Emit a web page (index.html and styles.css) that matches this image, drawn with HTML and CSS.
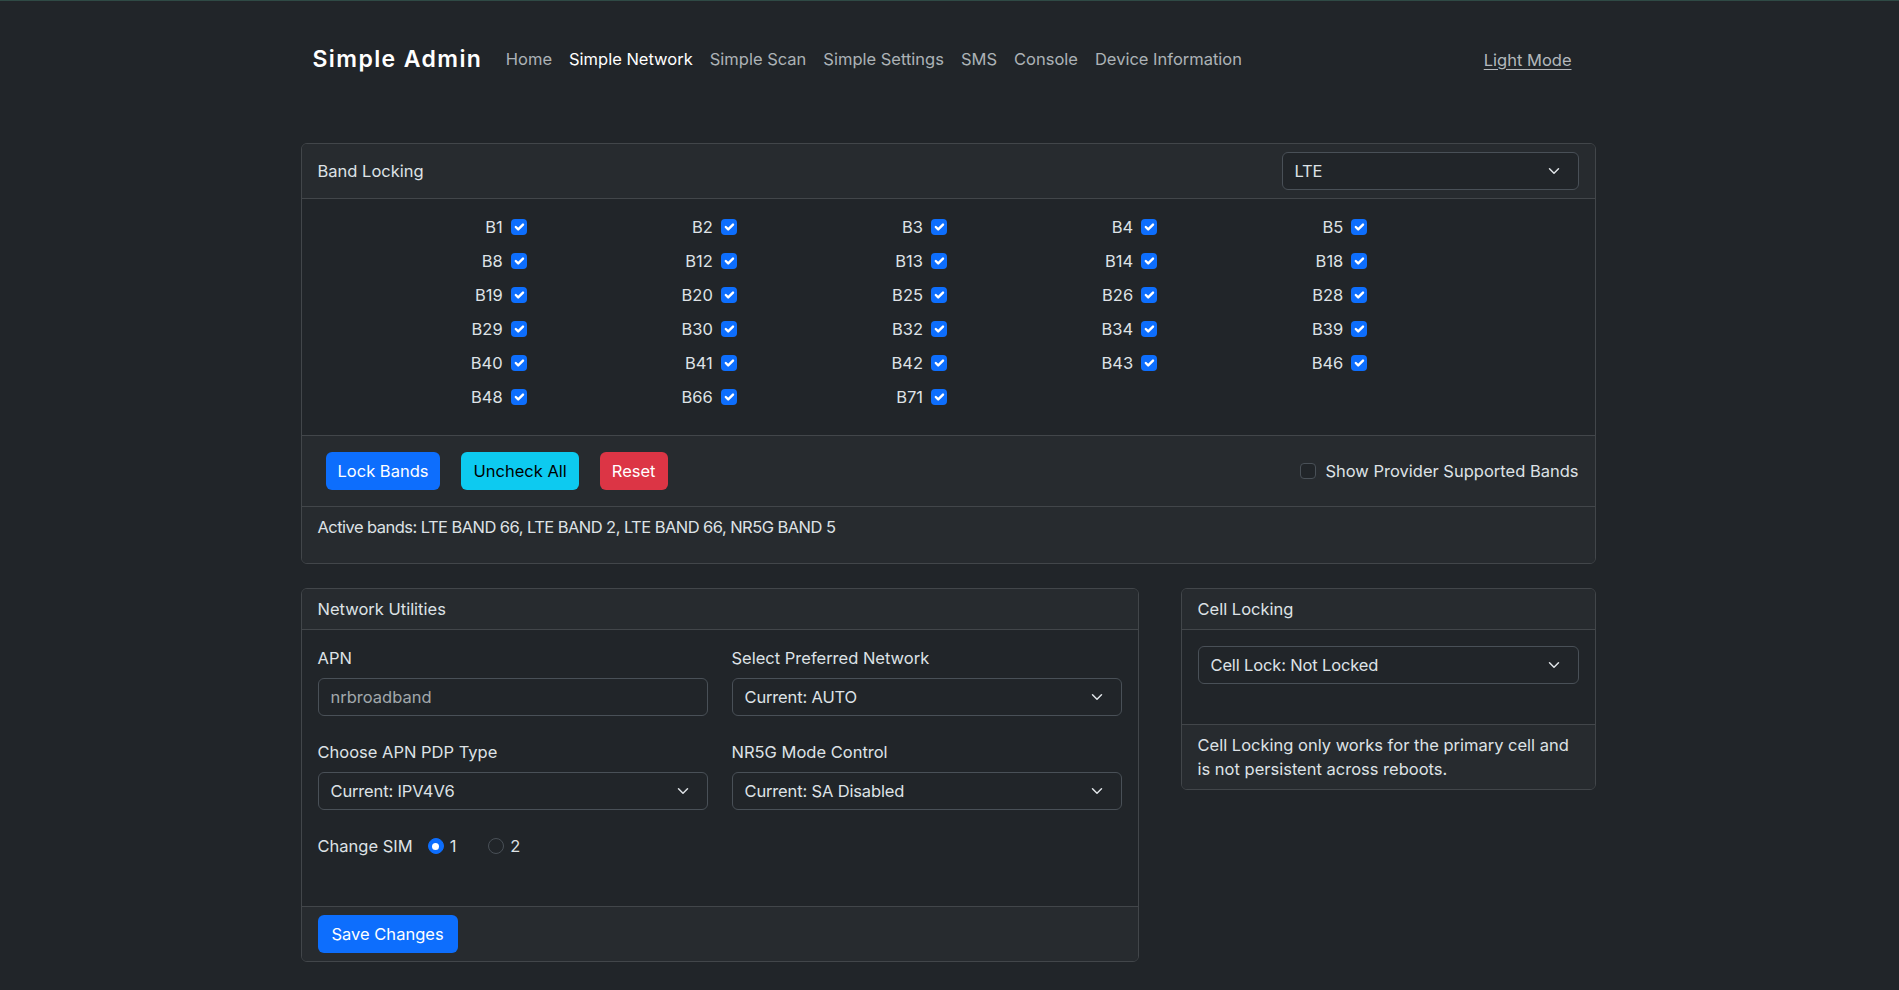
FILE: index.html
```html
<!DOCTYPE html>
<html lang="en">
<head>
<meta charset="utf-8">
<title>Simple Admin</title>
<link rel="stylesheet" href="styles.css">
</head>
<body>
<nav class="navbar">
  <div class="container nav-inner">
    <span class="brand">Simple Admin</span>
    <ul class="nav">
      <li><a href="#">Home</a></li>
      <li><a href="#" class="active">Simple Network</a></li>
      <li><a href="#">Simple Scan</a></li>
      <li><a href="#">Simple Settings</a></li>
      <li><a href="#">SMS</a></li>
      <li><a href="#">Console</a></li>
      <li><a href="#">Device Information</a></li>
    </ul>
    <a href="#" class="mode">Light Mode</a>
  </div>
</nav>

<main class="container main">
  <section class="card">
    <div class="card-header band-header">
      <span>Band Locking</span>
      <div class="select select-lte">
        <span>LTE</span>
        <svg class="chev" viewBox="0 0 16 16" width="16" height="12" preserveAspectRatio="xMidYMid meet"><path fill="none" stroke="#dee2e6" stroke-linecap="round" stroke-linejoin="round" stroke-width="2" d="m2 5 6 6 6-6"/></svg>
      </div>
    </div>
    <div class="band-body">
      <div class="band-grid">
        <div class="band"><span>B1</span><span class="cb"><svg viewBox="0 0 20 20"><path fill="none" stroke="#fff" stroke-linecap="round" stroke-linejoin="round" stroke-width="3" d="m6 10 3 3 6-6"/></svg></span></div>
        <div class="band"><span>B2</span><span class="cb"><svg viewBox="0 0 20 20"><path fill="none" stroke="#fff" stroke-linecap="round" stroke-linejoin="round" stroke-width="3" d="m6 10 3 3 6-6"/></svg></span></div>
        <div class="band"><span>B3</span><span class="cb"><svg viewBox="0 0 20 20"><path fill="none" stroke="#fff" stroke-linecap="round" stroke-linejoin="round" stroke-width="3" d="m6 10 3 3 6-6"/></svg></span></div>
        <div class="band"><span>B4</span><span class="cb"><svg viewBox="0 0 20 20"><path fill="none" stroke="#fff" stroke-linecap="round" stroke-linejoin="round" stroke-width="3" d="m6 10 3 3 6-6"/></svg></span></div>
        <div class="band"><span>B5</span><span class="cb"><svg viewBox="0 0 20 20"><path fill="none" stroke="#fff" stroke-linecap="round" stroke-linejoin="round" stroke-width="3" d="m6 10 3 3 6-6"/></svg></span></div>

        <div class="band"><span>B8</span><span class="cb"><svg viewBox="0 0 20 20"><path fill="none" stroke="#fff" stroke-linecap="round" stroke-linejoin="round" stroke-width="3" d="m6 10 3 3 6-6"/></svg></span></div>
        <div class="band"><span>B12</span><span class="cb"><svg viewBox="0 0 20 20"><path fill="none" stroke="#fff" stroke-linecap="round" stroke-linejoin="round" stroke-width="3" d="m6 10 3 3 6-6"/></svg></span></div>
        <div class="band"><span>B13</span><span class="cb"><svg viewBox="0 0 20 20"><path fill="none" stroke="#fff" stroke-linecap="round" stroke-linejoin="round" stroke-width="3" d="m6 10 3 3 6-6"/></svg></span></div>
        <div class="band"><span>B14</span><span class="cb"><svg viewBox="0 0 20 20"><path fill="none" stroke="#fff" stroke-linecap="round" stroke-linejoin="round" stroke-width="3" d="m6 10 3 3 6-6"/></svg></span></div>
        <div class="band"><span>B18</span><span class="cb"><svg viewBox="0 0 20 20"><path fill="none" stroke="#fff" stroke-linecap="round" stroke-linejoin="round" stroke-width="3" d="m6 10 3 3 6-6"/></svg></span></div>

        <div class="band"><span>B19</span><span class="cb"><svg viewBox="0 0 20 20"><path fill="none" stroke="#fff" stroke-linecap="round" stroke-linejoin="round" stroke-width="3" d="m6 10 3 3 6-6"/></svg></span></div>
        <div class="band"><span>B20</span><span class="cb"><svg viewBox="0 0 20 20"><path fill="none" stroke="#fff" stroke-linecap="round" stroke-linejoin="round" stroke-width="3" d="m6 10 3 3 6-6"/></svg></span></div>
        <div class="band"><span>B25</span><span class="cb"><svg viewBox="0 0 20 20"><path fill="none" stroke="#fff" stroke-linecap="round" stroke-linejoin="round" stroke-width="3" d="m6 10 3 3 6-6"/></svg></span></div>
        <div class="band"><span>B26</span><span class="cb"><svg viewBox="0 0 20 20"><path fill="none" stroke="#fff" stroke-linecap="round" stroke-linejoin="round" stroke-width="3" d="m6 10 3 3 6-6"/></svg></span></div>
        <div class="band"><span>B28</span><span class="cb"><svg viewBox="0 0 20 20"><path fill="none" stroke="#fff" stroke-linecap="round" stroke-linejoin="round" stroke-width="3" d="m6 10 3 3 6-6"/></svg></span></div>

        <div class="band"><span>B29</span><span class="cb"><svg viewBox="0 0 20 20"><path fill="none" stroke="#fff" stroke-linecap="round" stroke-linejoin="round" stroke-width="3" d="m6 10 3 3 6-6"/></svg></span></div>
        <div class="band"><span>B30</span><span class="cb"><svg viewBox="0 0 20 20"><path fill="none" stroke="#fff" stroke-linecap="round" stroke-linejoin="round" stroke-width="3" d="m6 10 3 3 6-6"/></svg></span></div>
        <div class="band"><span>B32</span><span class="cb"><svg viewBox="0 0 20 20"><path fill="none" stroke="#fff" stroke-linecap="round" stroke-linejoin="round" stroke-width="3" d="m6 10 3 3 6-6"/></svg></span></div>
        <div class="band"><span>B34</span><span class="cb"><svg viewBox="0 0 20 20"><path fill="none" stroke="#fff" stroke-linecap="round" stroke-linejoin="round" stroke-width="3" d="m6 10 3 3 6-6"/></svg></span></div>
        <div class="band"><span>B39</span><span class="cb"><svg viewBox="0 0 20 20"><path fill="none" stroke="#fff" stroke-linecap="round" stroke-linejoin="round" stroke-width="3" d="m6 10 3 3 6-6"/></svg></span></div>

        <div class="band"><span>B40</span><span class="cb"><svg viewBox="0 0 20 20"><path fill="none" stroke="#fff" stroke-linecap="round" stroke-linejoin="round" stroke-width="3" d="m6 10 3 3 6-6"/></svg></span></div>
        <div class="band"><span>B41</span><span class="cb"><svg viewBox="0 0 20 20"><path fill="none" stroke="#fff" stroke-linecap="round" stroke-linejoin="round" stroke-width="3" d="m6 10 3 3 6-6"/></svg></span></div>
        <div class="band"><span>B42</span><span class="cb"><svg viewBox="0 0 20 20"><path fill="none" stroke="#fff" stroke-linecap="round" stroke-linejoin="round" stroke-width="3" d="m6 10 3 3 6-6"/></svg></span></div>
        <div class="band"><span>B43</span><span class="cb"><svg viewBox="0 0 20 20"><path fill="none" stroke="#fff" stroke-linecap="round" stroke-linejoin="round" stroke-width="3" d="m6 10 3 3 6-6"/></svg></span></div>
        <div class="band"><span>B46</span><span class="cb"><svg viewBox="0 0 20 20"><path fill="none" stroke="#fff" stroke-linecap="round" stroke-linejoin="round" stroke-width="3" d="m6 10 3 3 6-6"/></svg></span></div>

        <div class="band"><span>B48</span><span class="cb"><svg viewBox="0 0 20 20"><path fill="none" stroke="#fff" stroke-linecap="round" stroke-linejoin="round" stroke-width="3" d="m6 10 3 3 6-6"/></svg></span></div>
        <div class="band"><span>B66</span><span class="cb"><svg viewBox="0 0 20 20"><path fill="none" stroke="#fff" stroke-linecap="round" stroke-linejoin="round" stroke-width="3" d="m6 10 3 3 6-6"/></svg></span></div>
        <div class="band"><span>B71</span><span class="cb"><svg viewBox="0 0 20 20"><path fill="none" stroke="#fff" stroke-linecap="round" stroke-linejoin="round" stroke-width="3" d="m6 10 3 3 6-6"/></svg></span></div>
      </div>
    </div>
    <div class="band-footer">
      <div class="btns">
        <button class="btn btn-primary">Lock Bands</button>
        <button class="btn btn-info">Uncheck All</button>
        <button class="btn btn-danger">Reset</button>
      </div>
      <label class="provider"><span class="cb-empty"></span><span>Show Provider Supported Bands</span></label>
    </div>
    <div class="active-bands">
      <p>Active bands: LTE BAND 66, LTE BAND 2, LTE BAND 66, NR5G BAND 5</p>
    </div>
  </section>

  <div class="lower">
    <section class="card">
      <div class="card-header">Network Utilities</div>
      <div class="card-body">
        <div class="form-grid">
          <div class="field">
            <label>APN</label>
            <input class="input" type="text" placeholder="nrbroadband">
          </div>
          <div class="field">
            <label>Select Preferred Network</label>
            <div class="select">
              <span>Current: AUTO</span>
              <svg class="chev" viewBox="0 0 16 16" width="16" height="12" preserveAspectRatio="xMidYMid meet"><path fill="none" stroke="#dee2e6" stroke-linecap="round" stroke-linejoin="round" stroke-width="2" d="m2 5 6 6 6-6"/></svg>
            </div>
          </div>
          <div class="field">
            <label>Choose APN PDP Type</label>
            <div class="select">
              <span>Current: IPV4V6</span>
              <svg class="chev" viewBox="0 0 16 16" width="16" height="12" preserveAspectRatio="xMidYMid meet"><path fill="none" stroke="#dee2e6" stroke-linecap="round" stroke-linejoin="round" stroke-width="2" d="m2 5 6 6 6-6"/></svg>
            </div>
          </div>
          <div class="field">
            <label>NR5G Mode Control</label>
            <div class="select">
              <span>Current: SA Disabled</span>
              <svg class="chev" viewBox="0 0 16 16" width="16" height="12" preserveAspectRatio="xMidYMid meet"><path fill="none" stroke="#dee2e6" stroke-linecap="round" stroke-linejoin="round" stroke-width="2" d="m2 5 6 6 6-6"/></svg>
            </div>
          </div>
        </div>
        <div class="sim">
          <span class="sim-label">Change SIM</span>
          <span class="radio checked"></span><span class="radio-text">1</span>
          <span class="radio"></span><span class="radio-text">2</span>
        </div>
      </div>
      <div class="card-footer">
        <button class="btn btn-primary btn-save">Save Changes</button>
      </div>
    </section>

    <section class="card cell-card">
      <div class="card-header">Cell Locking</div>
      <div class="card-body cell-body">
        <div class="select">
          <span>Cell Lock: Not Locked</span>
          <svg class="chev" viewBox="0 0 16 16" width="16" height="12" preserveAspectRatio="xMidYMid meet"><path fill="none" stroke="#dee2e6" stroke-linecap="round" stroke-linejoin="round" stroke-width="2" d="m2 5 6 6 6-6"/></svg>
        </div>
      </div>
      <div class="card-footer">
        Cell Locking only works for the primary cell and is not persistent across reboots.
      </div>
    </section>
  </div>
</main>
</body>
</html>
```
FILE: styles.css
```css
* { box-sizing: border-box; }

body {
  margin: 0;
  background: #212529;
  color: #dee2e6;
  font-family: Inter, "Noto Sans", sans-serif;
  font-size: 16.5px;
  line-height: 24px;
  border-top: 1px solid #2f4a45;
}

.container {
  width: 1320px;
  margin: 0 auto;
  padding: 0 12px;
}

/* navbar */
.nav-inner {
  display: flex;
  align-items: center;
  height: 116px;
}
.brand {
  font-size: 23px;
  line-height: 30px;
  font-weight: 600;
  letter-spacing: 1.4px;
  color: #fff;
  margin-left: 11px;
  margin-right: 15px;
}
.nav {
  display: flex;
  list-style: none;
  margin: 0;
  padding: 0;
}
.nav a {
  display: block;
  padding: 8px 8.5px;
  color: rgba(222, 226, 230, 0.75);
  text-decoration: none;
}
.nav a.active { color: #fff; }
.mode {
  margin-left: auto;
  margin-right: 26px;
  padding-top: 1px;
  color: rgba(222, 226, 230, 0.78);
  text-decoration: underline;
  text-underline-offset: 3px;
}

.main {
  padding: 26px 14px 40px 11px;
}

/* cards */
.card {
  border: 1px solid #42464a;
  border-radius: 6px;
  background: #212529;
  overflow: hidden;
}
.card-header {
  background: #272b2f;
  border-bottom: 1px solid #42464a;
  padding: 8px 16px;
}
.band-header {
  display: flex;
  align-items: center;
  justify-content: space-between;
}
.card-body { padding: 16px; }
.card-footer {
  background: #272b2f;
  border-top: 1px solid #42464a;
  padding: 8px 16px;
}

/* select / input */
.select {
  display: flex;
  align-items: center;
  justify-content: space-between;
  height: 38px;
  padding: 0 12px;
  border: 1px solid #495057;
  border-radius: 6px;
  background: #212529;
  color: #dee2e6;
  letter-spacing: -0.15px;
}
.chev { margin-right: 4px; flex: none; }
.select-lte { width: 297px; }

.input {
  display: block;
  width: 100%;
  height: 38px;
  padding: 0 12px;
  border: 1px solid #495057;
  border-radius: 6px;
  background: #212529;
  color: #dee2e6;
  font: inherit;
  outline: none;
}
.input::placeholder { color: rgba(222, 226, 230, 0.7); }

/* band grid */
.band-body { padding: 11px 16px 21px; }
.band-grid {
  width: 83.3333%;
  display: grid;
  grid-template-columns: repeat(5, minmax(0, 1fr));
  grid-auto-rows: 34px;
}
.band {
  display: flex;
  align-items: center;
  justify-content: flex-end;
  gap: 8px;
  padding-right: 1px;
}
.cb {
  width: 16px;
  height: 16px;
  border-radius: 4px;
  background: #0d6efd;
  display: flex;
}
.cb svg { width: 16px; height: 16px; }

.band-footer {
  background: #272b2f;
  border-top: 1px solid #42464a;
  padding: 16px 16px 16px 24px;
  display: flex;
  align-items: center;
  justify-content: space-between;
}
.btns { display: flex; gap: 21px; }
.btn {
  height: 38px;
  padding: 0 11px;
  border: 1px solid transparent;
  border-radius: 6px;
  font: inherit;
  cursor: pointer;
}
.btn-save { padding: 0 13px; }
.btn-primary { background: #0d6efd; color: #fff; }
.btn-info { background: #0dcaf0; color: #000; }
.btn-danger { background: #dc3545; color: #fff; }

.provider {
  display: flex;
  align-items: center;
  gap: 9px;
}
.cb-empty {
  width: 16px;
  height: 16px;
  border: 1px solid #495057;
  border-radius: 4px;
  background: #212529;
}

.active-bands {
  background: #272b2f;
  border-top: 1px solid #42464a;
  padding: 8px 16px;
}
.active-bands p {
  margin: 0 0 16px;
  letter-spacing: -0.55px;
}

/* lower row */
.lower {
  margin-top: 24px;
  display: grid;
  grid-template-columns: minmax(0, 838fr) minmax(0, 415fr);
  column-gap: 42px;
  align-items: start;
}

.form-grid {
  display: grid;
  grid-template-columns: 1fr 1fr;
  column-gap: 24px;
  row-gap: 24px;
}
.field label {
  display: block;
  margin-bottom: 8px;
}

.sim {
  display: flex;
  align-items: center;
  margin: 24px 0 32px;
  height: 24px;
}
.sim-label { margin-right: 15px; }
.radio {
  width: 16px;
  height: 16px;
  border-radius: 50%;
  border: 1px solid #495057;
  display: flex;
  align-items: center;
  justify-content: center;
}
.radio.checked {
  background: #0d6efd;
  border-color: #0d6efd;
}
.radio.checked::after {
  content: "";
  width: 7px;
  height: 7px;
  border-radius: 50%;
  background: #fff;
}
.radio-text { margin-left: 6px; margin-right: 32px; }

.cell-body { padding-bottom: 40px; }
```
